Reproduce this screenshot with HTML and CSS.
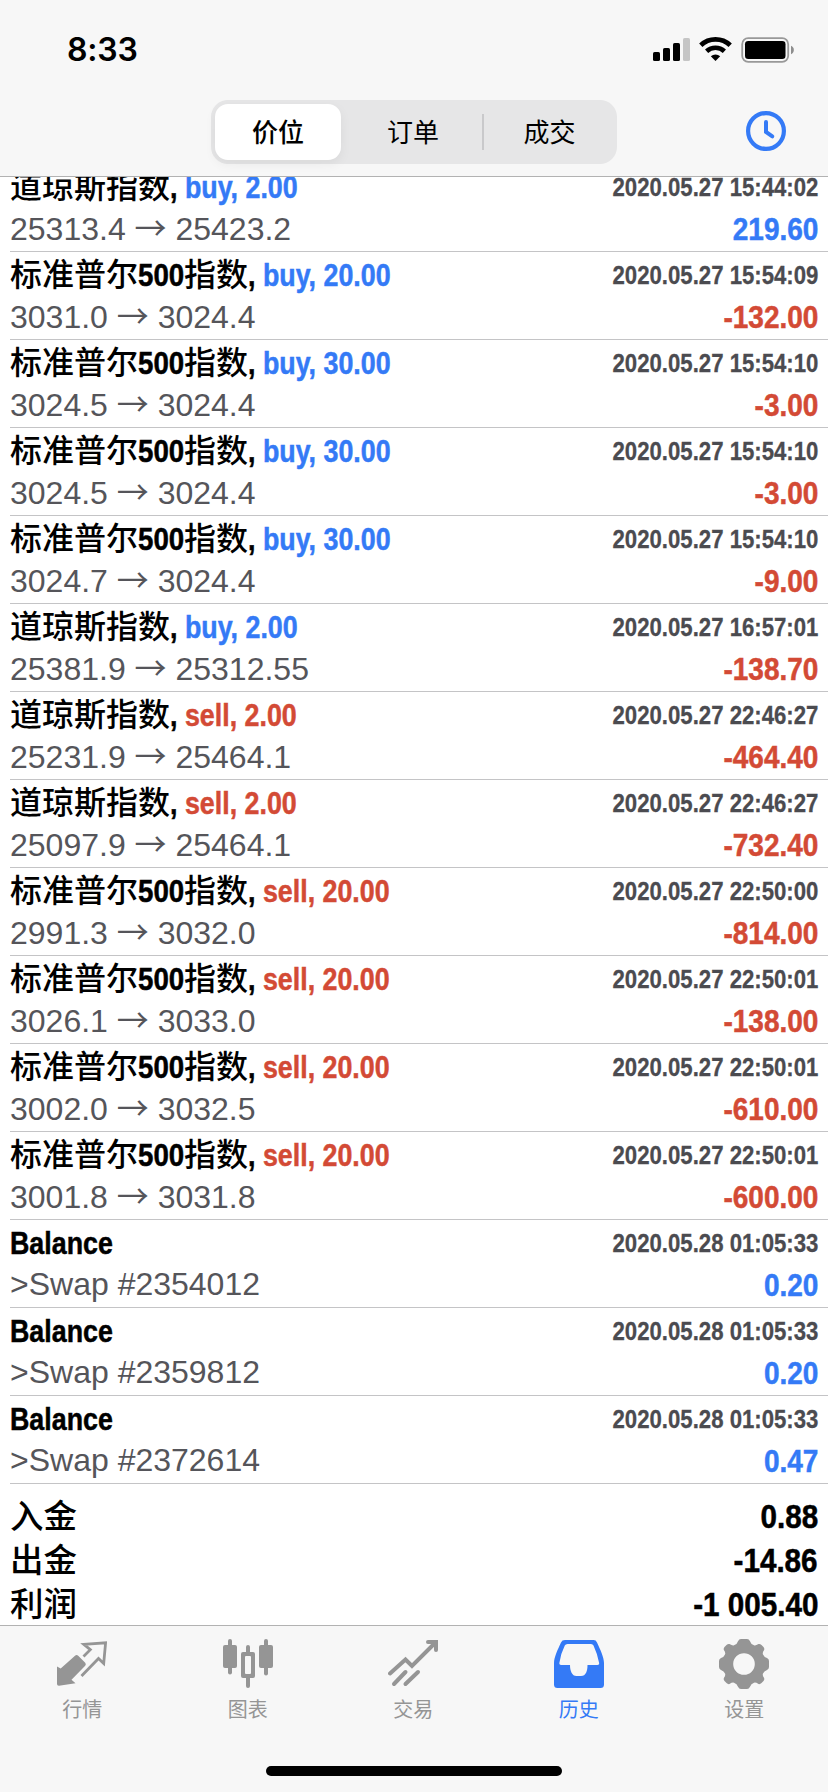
FILE: index.html
```html
<!DOCTYPE html>
<html lang="zh-CN">
<head>
<meta charset="utf-8">
<title>历史</title>
<link rel="stylesheet" href="styles.css">
</head>
<body>
<div class="screen">
  <header class="header">
    <div class="status">
      <span class="time">8:33</span>
      <svg class="status-icons" width="144" height="30" viewBox="0 0 144 30">
        <rect x="1" y="17" width="7" height="9" rx="1.6"/>
        <rect x="11" y="13" width="7" height="13" rx="1.6"/>
        <rect x="21" y="8" width="7" height="18" rx="1.6"/>
        <rect x="31" y="3" width="7" height="23" rx="1.6" fill="#c5c5c5"/>
        <g fill="none" stroke="#000">
          <path d="M48.800 10.200a21.500 21.500 0 0 1 29.400 0" stroke-width="4.800"/>
          <path d="M54.600 16.200a13 13 0 0 1 17.800 0" stroke-width="4.600"/>
        </g>
        <path d="M58.800 21.200a7 7 0 0 1 9.400 0L63.500 26z"/>
        <rect x="90.200" y="3.200" width="46" height="23.600" rx="6" fill="none" stroke="#999" stroke-width="1.800"/>
        <rect x="93" y="6" width="40.500" height="18" rx="3.300"/>
        <path d="M139 10.800c3.800 1.200 3.800 7.200 0 8.400z" fill="#8e8e8e"/>
      </svg>
    </div>
    <nav class="nav">
      <div class="segments">
        <span class="segment selected">价位</span>
        <span class="segment">订单</span>
        <span class="segment divided">成交</span>
      </div>
      <svg class="clock" width="40" height="40" viewBox="0 0 40 40" fill="none" stroke="#347af6">
        <circle cx="20" cy="20" r="17.900" stroke-width="4.200"/>
        <path d="M20 11v10l6.300 4.300" stroke-width="4" stroke-linecap="round"/>
      </svg>
    </nav>
  </header>

  <main class="content">
    <ul class="deals">
      <li class="deal"><span class="title">道琼斯指数<b>, <i class="buy">buy, 2.00</i></b></span><time>2020.05.27 15:44:02</time><span class="detail">25313.4 <span class="arrow">→</span> 25423.2</span><span class="profit gain">219.60</span></li>
      <li class="deal"><span class="title">标准普尔<b class="number">500</b>指数<b>, <i class="buy">buy, 20.00</i></b></span><time>2020.05.27 15:54:09</time><span class="detail">3031.0 <span class="arrow">→</span> 3024.4</span><span class="profit loss">-132.00</span></li>
      <li class="deal"><span class="title">标准普尔<b class="number">500</b>指数<b>, <i class="buy">buy, 30.00</i></b></span><time>2020.05.27 15:54:10</time><span class="detail">3024.5 <span class="arrow">→</span> 3024.4</span><span class="profit loss">-3.00</span></li>
      <li class="deal"><span class="title">标准普尔<b class="number">500</b>指数<b>, <i class="buy">buy, 30.00</i></b></span><time>2020.05.27 15:54:10</time><span class="detail">3024.5 <span class="arrow">→</span> 3024.4</span><span class="profit loss">-3.00</span></li>
      <li class="deal"><span class="title">标准普尔<b class="number">500</b>指数<b>, <i class="buy">buy, 30.00</i></b></span><time>2020.05.27 15:54:10</time><span class="detail">3024.7 <span class="arrow">→</span> 3024.4</span><span class="profit loss">-9.00</span></li>
      <li class="deal"><span class="title">道琼斯指数<b>, <i class="buy">buy, 2.00</i></b></span><time>2020.05.27 16:57:01</time><span class="detail">25381.9 <span class="arrow">→</span> 25312.55</span><span class="profit loss">-138.70</span></li>
      <li class="deal"><span class="title">道琼斯指数<b>, <i class="sell">sell, 2.00</i></b></span><time>2020.05.27 22:46:27</time><span class="detail">25231.9 <span class="arrow">→</span> 25464.1</span><span class="profit loss">-464.40</span></li>
      <li class="deal"><span class="title">道琼斯指数<b>, <i class="sell">sell, 2.00</i></b></span><time>2020.05.27 22:46:27</time><span class="detail">25097.9 <span class="arrow">→</span> 25464.1</span><span class="profit loss">-732.40</span></li>
      <li class="deal"><span class="title">标准普尔<b class="number">500</b>指数<b>, <i class="sell">sell, 20.00</i></b></span><time>2020.05.27 22:50:00</time><span class="detail">2991.3 <span class="arrow">→</span> 3032.0</span><span class="profit loss">-814.00</span></li>
      <li class="deal"><span class="title">标准普尔<b class="number">500</b>指数<b>, <i class="sell">sell, 20.00</i></b></span><time>2020.05.27 22:50:01</time><span class="detail">3026.1 <span class="arrow">→</span> 3033.0</span><span class="profit loss">-138.00</span></li>
      <li class="deal"><span class="title">标准普尔<b class="number">500</b>指数<b>, <i class="sell">sell, 20.00</i></b></span><time>2020.05.27 22:50:01</time><span class="detail">3002.0 <span class="arrow">→</span> 3032.5</span><span class="profit loss">-610.00</span></li>
      <li class="deal"><span class="title">标准普尔<b class="number">500</b>指数<b>, <i class="sell">sell, 20.00</i></b></span><time>2020.05.27 22:50:01</time><span class="detail">3001.8 <span class="arrow">→</span> 3031.8</span><span class="profit loss">-600.00</span></li>
      <li class="deal"><span class="title"><b>Balance</b></span><time>2020.05.28 01:05:33</time><span class="detail">&gt;Swap #2354012</span><span class="profit gain">0.20</span></li>
      <li class="deal"><span class="title"><b>Balance</b></span><time>2020.05.28 01:05:33</time><span class="detail">&gt;Swap #2359812</span><span class="profit gain">0.20</span></li>
      <li class="deal"><span class="title"><b>Balance</b></span><time>2020.05.28 01:05:33</time><span class="detail">&gt;Swap #2372614</span><span class="profit gain">0.47</span></li>
    </ul>
    <dl class="totals">
      <div class="total"><dt>入金</dt><dd>0.88</dd></div>
      <div class="total"><dt>出金</dt><dd>-14.86</dd></div>
      <div class="total"><dt>利润</dt><dd>-1 005.40</dd></div>
    </dl>
  </main>

  <footer class="tabbar">
    <div class="tabs">
      <div class="tab">
        <svg width="50" height="50" viewBox="0 0 50 50">
          <path d="M0 27.500 3.700 29.500 18 16.800q1.600-1.400 3.200 0l7 7q1.300 1.500 0 3L14.500 40.800 18.500 44.200 2 46.700Q0 46.800 0 45z" fill="currentColor"/>
          <path d="M26.500 17.500 33.300 10.700 26.800 5.300 48.600 3.800 46.700 24.500 41.500 19.500 24.500 37" fill="none" stroke="currentColor" stroke-width="2.800"/>
        </svg>
        <span>行情</span>
      </div>
      <div class="tab">
        <svg width="50" height="50" viewBox="0 0 50 50">
          <g fill="currentColor">
            <rect y="6" width="14" height="23" rx="2"/><rect x="5" width="4" height="35.500" rx="2"/>
            <rect x="36" y="6" width="14" height="23" rx="2"/><rect x="41" width="4" height="36.500" rx="2"/>
            <rect x="23" y="6" width="4" height="10" rx="2"/><rect x="23" y="37" width="4" height="12" rx="2"/>
            <path fill-rule="evenodd" d="M20 13h10q2 0 2 2v22q0 2-2 2H20q-2 0-2-2V15q0-2 2-2zm3 4q-1 0-1 1v16q0 1 1 1h4q1 0 1-1V18q0-1-1-1z"/>
          </g>
        </svg>
        <span>图表</span>
      </div>
      <div class="tab">
        <svg width="50" height="50" viewBox="0 0 50 50" fill="none" stroke="currentColor" stroke-width="4" stroke-linecap="round" stroke-linejoin="miter">
          <path d="M2 34.500 17.500 20.500 24 27 46.500 4.500"/>
          <path d="M40 3H48V11"/>
          <path d="M6 45 17.500 33M17.500 45 30 33"/>
        </svg>
        <span>交易</span>
      </div>
      <div class="tab active">
        <svg width="50" height="50" viewBox="0 0 50 50">
          <path fill="currentColor" fill-rule="evenodd" d="M11 1H39.500Q42 1 43 3.400C46 10 50 18 50 24V45.500Q50 49 46.500 49H3.500Q0 49 0 45.500V24C0 18 4 10 7 3.400Q8 1 11 1zM13.500 5Q11.500 5 10.800 6.500 6.500 15 5.300 24.300 5.300 26 7 26H16C16 32 18 37 22.500 37H27C32 37 33.500 32 33.500 26H43.500Q45.400 26 45.200 24.300 43.500 15 39.500 6.500 38.800 5 37 5z"/>
        </svg>
        <span>历史</span>
      </div>
      <div class="tab">
        <svg width="50" height="50" viewBox="0 0 50 50">
          <path fill="currentColor" fill-rule="evenodd" d="M22 0H28Q30 0 31 2.200Q32 5.500 35 6.300Q36.500 7 39.500 5Q41 4.500 42.500 6L44.500 8Q45.800 9.500 45 11.200Q43.200 13.500 44 15.500Q45 18 48 19Q50 20 50 22V28Q50 30 48 31Q45 32 44 34.500Q43.200 36.500 45 38.800Q45.800 40.500 44.500 42L42.500 44Q41 45.500 39.500 45Q36.500 43 35 43.700Q32 44.500 31 47.800Q30 50 28 50H22Q20 50 19 47.800Q18 44.500 15 43.700Q13.500 43 10.500 45Q9 45.500 7.500 44L5.500 42Q4.200 40.500 5 38.800Q6.800 36.500 6 34.500Q5 32 2 31Q0 30 0 28V22Q0 20 2 19Q5 18 6 15.500Q6.800 13.500 5 11.200Q4.200 9.500 5.500 8L7.500 6Q9 4.500 10.500 5Q13.500 7 15 6.300Q18 5.500 19 2.200Q20 0 22 0zM25 14.200a10.800 10.800 0 1 0 0 21.600a10.800 10.800 0 1 0 0-21.600z"/>
        </svg>
        <span>设置</span>
      </div>
    </div>
    <div class="home-indicator"></div>
  </footer>
</div>
</body>
</html>
```
FILE: styles.css
```css
* { box-sizing: border-box; }

body {
  margin: 0;
  background: #fff;
  color: #000;
  font-family: "Liberation Sans", "Noto Sans CJK SC", sans-serif;
}

.screen {
  display: flex;
  flex-direction: column;
  width: 828px;
  height: 1792px;
  overflow: hidden;
}

.header {
  flex: none;
  height: 177px;
  background: #f7f7f7;
  border-bottom: 1px solid #b2b2b2;
}

.status {
  display: flex;
  justify-content: space-between;
  height: 100px;
  padding: 35px 32px 0 67px;
}

.time {
  font: 600 32px/30px Inter, sans-serif;
  letter-spacing: -.2px;
}

.status-icons { display: block; }

.nav {
  display: flex;
  justify-content: space-between;
  padding: 0 42px 0 211px;
}

.segments {
  display: grid;
  grid-template-columns: 126px 1fr 135px;
  width: 406px;
  height: 64px;
  padding: 4px 0 4px 4px;
  border-radius: 17px;
  background: #e6e6e7;
}

.segment {
  padding-left: 3px;
  font: 400 26px/53px "Noto Sans CJK SC", sans-serif;
  text-align: center;
}

.selected {
  padding-left: 0;
  border-radius: 13px;
  background: #fff;
  font-weight: 500;
  box-shadow: 0 4px 12px rgba(0, 0, 0, .06);
}

.divided {
  padding-left: 0;
  background: linear-gradient(#c9c9cb, #c9c9cb) 0 10px / 2px 36px no-repeat;
}

.clock { margin-top: 11px; }

.content {
  flex: none;
  height: 1448px;
  overflow: hidden;
}

.deals {
  margin: -13px 0 0;
  padding: 0 0 0 10px;
  list-style: none;
}

.deal {
  display: grid;
  grid-template: 46px 41px / 1fr auto;
  height: 88px;
  padding-right: 10px;
  border-bottom: 1px solid #c4c4c6;
  white-space: nowrap;
}

.title {
  height: 42px;
  font: 500 32px/40px "Noto Sans CJK SC", sans-serif;
}

/* Condensed bold face: narrowed horizontally from the start edge */
.title b {
  display: inline-block;
  font: 700 32px/1 "Liberation Sans", sans-serif;
  transform: scaleX(.838);
  transform-origin: left;
  -webkit-text-stroke: .5px currentColor;
}

.title .number {
  margin-right: -7.500px;
  transform: scaleX(.865);
}

.title i {
  font-style: normal;
  -webkit-text-stroke: .5px currentColor;
}

/* Right-aligned figures are narrowed toward the right edge */
time, .profit, dd {
  font-weight: 700;
  text-align: right;
  transform: scaleX(.875);
  transform-origin: right;
  -webkit-text-stroke: .5px currentColor;
}

time {
  height: 46px;
  color: #4b4b50;
  font-size: 26px;
  line-height: 46px;
  transform: scaleX(.853);
  -webkit-text-stroke-width: .3px;
}

.detail {
  height: 41px;
  color: #55555a;
  font-size: 32px;
  line-height: 36px;
}

.arrow {
  font-family: "Noto Sans CJK SC", sans-serif;
  font-weight: 400;
  line-height: 1;
}

.profit {
  height: 41px;
  font-size: 32px;
  line-height: 38px;
}

.buy, .gain { color: #347af6; }
.sell, .loss { color: #d34a35; }

.totals { margin: 0; padding: 11px 10px 0; }

.total {
  display: flex;
  justify-content: space-between;
  height: 44px;
}

dt { font: 500 33.500px/38px "Noto Sans CJK SC", sans-serif; }

dd {
  margin: 0;
  font-size: 33px;
  line-height: 44px;
  transform: scaleX(.898);
}

.tabbar {
  flex: none;
  height: 167px;
  border-top: 1px solid #b2b2b2;
  background: #f7f7f7;
}

.tabs {
  display: grid;
  grid-template-columns: repeat(5, 165.500px);
  height: 140px;
  margin-left: -.5px;
  padding-top: 13px;
}

.tab {
  display: flex;
  flex-direction: column;
  align-items: center;
  color: #959595;
  font: 400 20px/40px "Noto Sans CJK SC", sans-serif;
}

.tab.active { color: #347af6; }

.home-indicator {
  width: 296px;
  height: 10px;
  margin: 0 auto;
  border-radius: 5px;
  background: #000;
}
```
